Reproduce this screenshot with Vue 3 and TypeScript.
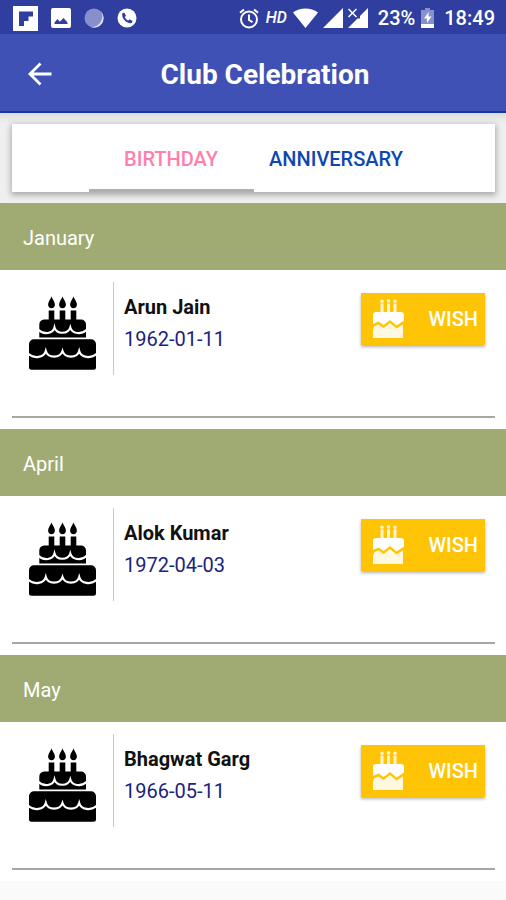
<script setup lang="ts">
import { ref } from 'vue'

interface Celebration {
  month: string
  name: string
  date: string
}

type TabId = 'birthday' | 'anniversary'

const tabs: { id: TabId; label: string }[] = [
  { id: 'birthday', label: 'BIRTHDAY' },
  { id: 'anniversary', label: 'ANNIVERSARY' },
]

const active = ref<TabId>('birthday')

const celebrations: Celebration[] = [
  { month: 'January', name: 'Arun Jain', date: '1962-01-11' },
  { month: 'April', name: 'Alok Kumar', date: '1972-04-03' },
  { month: 'May', name: 'Bhagwat Garg', date: '1966-05-11' },
]
</script>

<template>
  <div class="screen">
    <div class="status">
      <div class="notices">
        <svg width="25" height="25" viewBox="0 0 25 25">
          <rect width="25" height="25" fill="#fff" />
          <path d="M6 5.500h14v5h-4.500v4.500H11v5H6z" fill="#303f9f" />
        </svg>
        <svg width="20" height="20" viewBox="0 0 20 20">
          <rect width="20" height="20" rx="2" fill="#fff" />
          <path d="M3.500 16v-1.500l3-3.500 2 2.500 1-.5 3-3 4 4.500V16z" fill="#303f9f" />
        </svg>
        <svg width="20" height="20" viewBox="0 0 20 20">
          <circle cx="10" cy="10" r="9.500" fill="#8790cb" />
          <path d="M17 3.500A9.500 9.500 0 0 1 7 19a10.500 10.500 0 0 0 10-15.500z" fill="#e4e6f5" />
        </svg>
        <svg width="20" height="20" viewBox="0 0 20 20">
          <circle cx="10" cy="10" r="9.500" fill="#fff" />
          <path d="M5.200 5.500l2-1 1.800 3.200-1.200 1.200c.8 1.700 1.900 2.800 3.500 3.500l1.300-1.200 3 1.700-.9 2.200c-4.800.9-10.300-4.500-9.500-9.600z" fill="#303f9f" />
        </svg>
      </div>
      <div class="system">
        <div class="cluster">
          <svg width="20" height="21" viewBox="0 0 20 21" fill="none" stroke="#fff" stroke-width="2">
            <circle cx="10" cy="11.500" r="8" />
            <path d="M10 6.500v5.500l3.500 2.200M1 4.800L5 1.400M19 4.800L15 1.400" />
          </svg>
          <span class="hd">HD</span>
        </div>
        <div class="cluster signals">
          <svg width="25" height="20" viewBox="0 0 25 20">
            <path d="M0 4.500C7-1 18-1 25 4.500L12.500 20z" fill="#fff" />
          </svg>
          <svg width="20" height="20" viewBox="0 0 20 20">
            <path d="M20 0v20H0z" fill="#fff" />
          </svg>
          <svg width="20" height="20" viewBox="0 0 20 20">
            <path d="M20 0v20H0l9.500-9.500H12V8z" fill="#fff" />
            <path d="M.5 1l8 8M8.500 1l-8 8" stroke="#fff" stroke-width="1.500" />
          </svg>
        </div>
        <div class="cluster battery">
          <span>23%</span>
          <svg width="13" height="20" viewBox="0 0 13 20">
            <path d="M4 0h5v2h4v14H0V2h4z" fill="#8790cb" />
            <path d="M0 16h13v4H0zM7.500 4L3 10.500h3V15l4.500-6.500h-3z" fill="#fff" />
          </svg>
        </div>
        <span>18:49</span>
      </div>
    </div>

    <header class="appbar">
      <button class="back" type="button" aria-label="Back">
        <svg width="24" height="24" viewBox="0 0 24 24" fill="none" stroke="#fff" stroke-width="2.800">
          <path d="M23.500 12H2.500M12.500 1.500L2 12l10.500 10.500" />
        </svg>
      </button>
      <h1>Club Celebration</h1>
    </header>

    <nav class="tabzone">
      <div class="tabs" role="tablist">
        <button
          v-for="tab in tabs"
          :key="tab.id"
          type="button"
          role="tab"
          class="tab"
          :class="{ active: active === tab.id }"
          :aria-selected="active === tab.id"
          @click="active = tab.id"
        >
          {{ tab.label }}
        </button>
      </div>
    </nav>

    <main>
      <section v-for="item in celebrations" :key="item.name">
        <h2>{{ item.month }}</h2>
        <div class="entry">
          <div class="person">
            <div class="picture">
              <svg width="67" height="74" viewBox="0 0 67 74">
                <path
                  v-for="x in [22, 33, 44]"
                  :key="x"
                  :transform="`translate(${x} 0)`"
                  d="M.5.500C1.500 3.500 3.900 5.500 3.900 8.500 3.900 10.800 2.500 12.300.5 12.300S-2.900 10.800-2.900 8.500C-2.900 5.500-.5 3.500.5.500zM-2.300 14.500h5.600V25h-5.600z"
                />
                <path d="M15 23.500h37a5 5 0 0 1 5 5V41.500H10.300V28.500a5 5 0 0 1 4.700-5z" />
                <path d="M5 43.200h57a5 5 0 0 1 5 5v23a2.500 2.500 0 0 1-2.500 2.500h-62A2.500 2.500 0 0 1 0 71.200v-23a5 5 0 0 1 5-5z" />
                <g fill="none" stroke="#fff" stroke-width="2.200" stroke-linejoin="miter">
                  <path d="M9 33.500C15 39.500 24 37.500 25.500 31.500 27.500 38.500 39 38.500 41.300 31.500 43 37.500 52 39.500 58 33.500" />
                  <path d="M-1 57.500C5 63.500 15 61.500 16.800 55 19 62.500 31 62.500 33.500 55 36 62.500 48 62.500 50.200 55 52 61.500 62 63.500 68 57.500" />
                </g>
              </svg>
            </div>
            <div class="details">
              <h3>{{ item.name }}</h3>
              <time :datetime="item.date">{{ item.date }}</time>
            </div>
            <button class="wish" type="button">
              <svg width="31" height="39" viewBox="0 0 31 39">
                <g fill="#fff" fill-opacity="0.820">
                  <path d="M7.500 4.500h3V14h-3zM14 4.500h3V14h-3zM20.500 4.500h3V14h-3z" />
                  <circle cx="9" cy="2.200" r="1.800" />
                  <circle cx="15.500" cy="1.900" r="1.800" />
                  <circle cx="22" cy="2.200" r="1.800" />
                </g>
                <path d="M3 13h25a3 3 0 0 1 3 3v5.500l-7.500 5-6.500-5.500-6.500 5-5-3.500L0 25v-9a3 3 0 0 1 3-3z" fill="#fff" />
                <path d="M1 27.500l4.500-2 5 3.500 6.500-5 6.500 5.500 6.500-4V39H0v-8z" fill="#fff8e0" />
              </svg>
              <span>WISH</span>
            </button>
          </div>
        </div>
      </section>
    </main>
  </div>
</template>

<style>
body {
  margin: 0;
  background: #fafafa;
}
</style>

<style scoped>
.screen {
  font-family: Roboto, "Liberation Sans", sans-serif;
  font-size: 20px;
  line-height: 24px;
}

svg {
  display: block;
  flex: none;
}

button {
  border: 0;
  padding: 0;
  font: inherit;
  cursor: pointer;
}

h1,
h2,
h3 {
  margin: 0;
}

.status {
  display: flex;
  align-items: center;
  justify-content: space-between;
  height: 34px;
  padding: 2px 11px 0 13px;
  box-sizing: border-box;
  background: #303f9f;
  color: #fff;
  font-weight: 500;
}

.notices {
  display: flex;
  align-items: center;
  gap: 13px;
}

.system {
  display: flex;
  align-items: center;
  gap: 10px;
}

.cluster {
  display: flex;
  align-items: center;
  gap: 7px;
}

.signals {
  gap: 5px;
  margin-left: -4px;
}

.battery {
  gap: 6px;
}

.hd {
  font-size: 16px;
  font-style: italic;
}

.appbar {
  display: grid;
  grid-template-columns: 56px 1fr 56px;
  align-items: center;
  height: 79px;
  box-sizing: border-box;
  border-bottom: 2px solid #1535a5;
  background: #3f51b5;
  color: #fff;
}

.back {
  display: flex;
  justify-content: flex-end;
  padding: 10px 4px 8px 0;
  background: none;
}

h1 {
  padding: 4px 0 0 24px;
  text-align: center;
  font-size: 28px;
  line-height: 32px;
  font-weight: 700;
  white-space: nowrap;
}

.tabzone {
  padding: 11px 11px 11px 12px;
  background: linear-gradient(#dcdddb, #efefef 10px);
}

.tabs {
  display: flex;
  justify-content: center;
  height: 68px;
  background: #fff;
  box-shadow: 0 2px 6px 1px rgba(0, 0, 0, 0.3);
}

.tab {
  width: 165px;
  border-top: 4px solid transparent;
  border-bottom: 3px solid transparent;
  background: none;
  color: #0d47b0;
  font-weight: 500;
}

.tab.active {
  border-bottom-color: #b0b0b0;
  color: #ff80ab;
}

section {
  background: #fff;
}

h2 {
  padding: 23px 23px 20px;
  background: #9fab73;
  color: #fff;
  font-size: 20px;
  line-height: 24px;
  font-weight: 400;
}

.entry {
  padding: 12px 11px 11px 12px;
}

.person {
  display: flex;
  align-items: flex-start;
  padding: 0 10px 41px 0;
  border-bottom: 2px solid #a6a6a6;
}

.picture {
  padding: 14px 17px 5px;
  border-right: 1px solid #c8c8c8;
}

.details {
  flex: 1;
  padding: 13px 0 0 10px;
}

h3 {
  font-size: 20px;
  line-height: 24px;
  font-weight: 700;
  color: #111;
}

time {
  display: block;
  margin-top: 8px;
  color: #1a237e;
}

.wish {
  display: flex;
  align-items: center;
  justify-content: space-between;
  width: 124px;
  height: 52px;
  margin-top: 11px;
  padding: 0 7px 2px 12px;
  background: #ffc406;
  color: #fff;
  font-weight: 500;
  box-shadow: 0 2px 3px rgba(0, 0, 0, 0.3);
}

.wish span {
  padding-top: 2px;
}
</style>
